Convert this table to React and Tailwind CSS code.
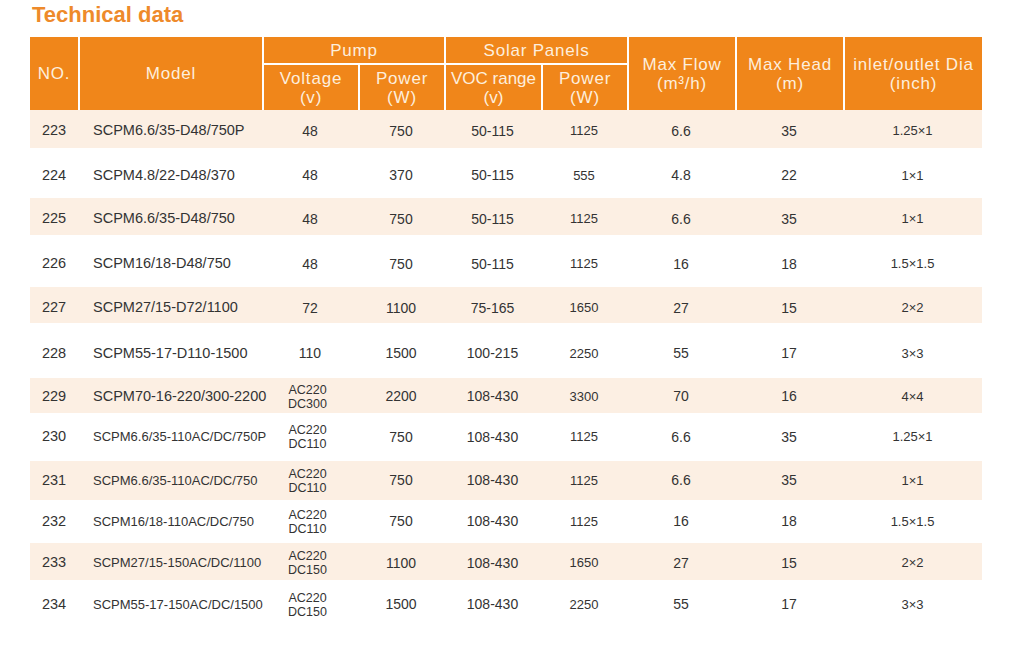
import React from "react";

const cols = "grid grid-cols-[48px_184px_96px_86px_97px_86px_108px_108px_139px]";

const rows = [
  { no: "223", model: "SCPM6.6/35-D48/750P", v: ["48"], p: "750", voc: "50-115", sp: "1125", flow: "6.6", head: "35", dia: "1.25×1", h: "h-[38px]", shade: true, small: false, pad: "pt-[4px]" },
  { no: "224", model: "SCPM4.8/22-D48/370", v: ["48"], p: "370", voc: "50-115", sp: "555", flow: "4.8", head: "22", dia: "1×1", h: "h-[50px]", shade: false, small: false, pad: "pt-[5px]" },
  { no: "225", model: "SCPM6.6/35-D48/750", v: ["48"], p: "750", voc: "50-115", sp: "1125", flow: "6.6", head: "35", dia: "1×1", h: "h-[37px]", shade: true, small: false, pad: "pt-[5px]" },
  { no: "226", model: "SCPM16/18-D48/750", v: ["48"], p: "750", voc: "50-115", sp: "1125", flow: "16", head: "18", dia: "1.5×1.5", h: "h-[52px]", shade: false, small: false, pad: "pt-[6px]" },
  { no: "227", model: "SCPM27/15-D72/1100", v: ["72"], p: "1100", voc: "75-165", sp: "1650", flow: "27", head: "15", dia: "2×2", h: "h-[36px]", shade: true, small: false, pad: "pt-[6px]" },
  { no: "228", model: "SCPM55-17-D110-1500", v: ["110"], p: "1500", voc: "100-215", sp: "2250", flow: "55", head: "17", dia: "3×3", h: "h-[55px]", shade: false, small: false, pad: "pt-[6px]" },
  { no: "229", model: "SCPM70-16-220/300-2200", v: ["AC220", "DC300"], p: "2200", voc: "108-430", sp: "3300", flow: "70", head: "16", dia: "4×4", h: "h-[35px]", shade: true, small: false, pad: "pt-[2px]" },
  { no: "230", model: "SCPM6.6/35-110AC/DC/750P", v: ["AC220", "DC110"], p: "750", voc: "108-430", sp: "1125", flow: "6.6", head: "35", dia: "1.25×1", h: "h-[48px]", shade: false, small: true, pad: "pt-[0px]" },
  { no: "231", model: "SCPM6.6/35-110AC/DC/750", v: ["AC220", "DC110"], p: "750", voc: "108-430", sp: "1125", flow: "6.6", head: "35", dia: "1×1", h: "h-[39px]", shade: true, small: true, pad: "pt-[0px]" },
  { no: "232", model: "SCPM16/18-110AC/DC/750", v: ["AC220", "DC110"], p: "750", voc: "108-430", sp: "1125", flow: "16", head: "18", dia: "1.5×1.5", h: "h-[43px]", shade: false, small: true, pad: "pt-[0px]" },
  { no: "233", model: "SCPM27/15-150AC/DC/1100", v: ["AC220", "DC150"], p: "1100", voc: "108-430", sp: "1650", flow: "27", head: "15", dia: "2×2", h: "h-[37px]", shade: true, small: true, pad: "pt-[3px]" },
  { no: "234", model: "SCPM55-17-150AC/DC/1500", v: ["AC220", "DC150"], p: "1500", voc: "108-430", sp: "2250", flow: "55", head: "17", dia: "3×3", h: "h-[46px]", shade: false, small: true, pad: "pt-[3px]" },
];

function HCell({ children, className = "" }) {
  return (
    <div className={"flex flex-col items-center justify-center text-center leading-[19px] " + className}>
      {children}
    </div>
  );
}

function Row({ r }) {
  const cell = "flex items-center justify-center";
  return (
    <div className={`${cols} ${r.h} ${r.pad} ${r.shade ? "bg-[#fcefe3]" : "bg-white"} text-[#333333] text-[14px]`}>
      <div className={cell + " text-[14.5px]"}>{r.no}</div>
      <div className={"flex items-center pl-[15px] whitespace-nowrap " + (r.small ? "text-[13px]" : "text-[14.5px]")}>{r.model}</div>
      <div className={"flex flex-col items-center justify-center " + (r.v.length > 1 ? "text-[12.5px] leading-[14px] -ml-[5px]" : "")}>
        {r.v.map((x) => (
          <span key={x}>{x}</span>
        ))}
      </div>
      <div className={cell}>{r.p}</div>
      <div className={cell}>{r.voc}</div>
      <div className={cell + " text-[13px]"}>{r.sp}</div>
      <div className={cell}>{r.flow}</div>
      <div className={cell}>{r.head}</div>
      <div className={cell + " text-[13px]"}>{r.dia}</div>
    </div>
  );
}

export default function App() {
  return (
    <div className="w-[1024px] h-[669px] bg-white font-['Liberation_Sans',Arial,Helvetica,sans-serif] overflow-hidden">
      <div className="pl-[32px] pt-[1px] h-[37px]">
        <h1 className="text-[22px] font-bold leading-[28px] text-[#ee8a2b]">Technical data</h1>
      </div>
      <div className="ml-[30px] w-[952px]">
        <div className={`${cols} grid-rows-[28px_45px] bg-[#f0861a] text-[#fdeedd] text-[17px] tracking-[0.8px]`}>
          <HCell className="row-span-2">NO.</HCell>
          <HCell className="row-span-2 border-l-2 border-white">Model</HCell>
          <HCell className="col-span-2 border-l-2 border-b-2 border-white">Pump</HCell>
          <HCell className="col-span-2 border-l-2 border-b-2 border-white">Solar Panels</HCell>
          <HCell className="row-span-2 border-l-2 border-white">
            <span>Max Flow</span>
            <span>(m³/h)</span>
          </HCell>
          <HCell className="row-span-2 border-l-2 border-white">
            <span>Max Head</span>
            <span>(m)</span>
          </HCell>
          <HCell className="row-span-2 border-l-2 border-white">
            <span>inlet/outlet Dia</span>
            <span>(inch)</span>
          </HCell>
          <HCell className="border-l-2 border-white">
            <span>Voltage</span>
            <span>(v)</span>
          </HCell>
          <HCell className="border-l-2 border-white">
            <span>Power</span>
            <span>(W)</span>
          </HCell>
          <HCell className="border-l-2 border-white tracking-[0px]">
            <span>VOC range</span>
            <span>(v)</span>
          </HCell>
          <HCell className="border-l-2 border-white">
            <span>Power</span>
            <span>(W)</span>
          </HCell>
        </div>
        {rows.map((r) => (
          <Row key={r.no} r={r} />
        ))}
      </div>
    </div>
  );
}
